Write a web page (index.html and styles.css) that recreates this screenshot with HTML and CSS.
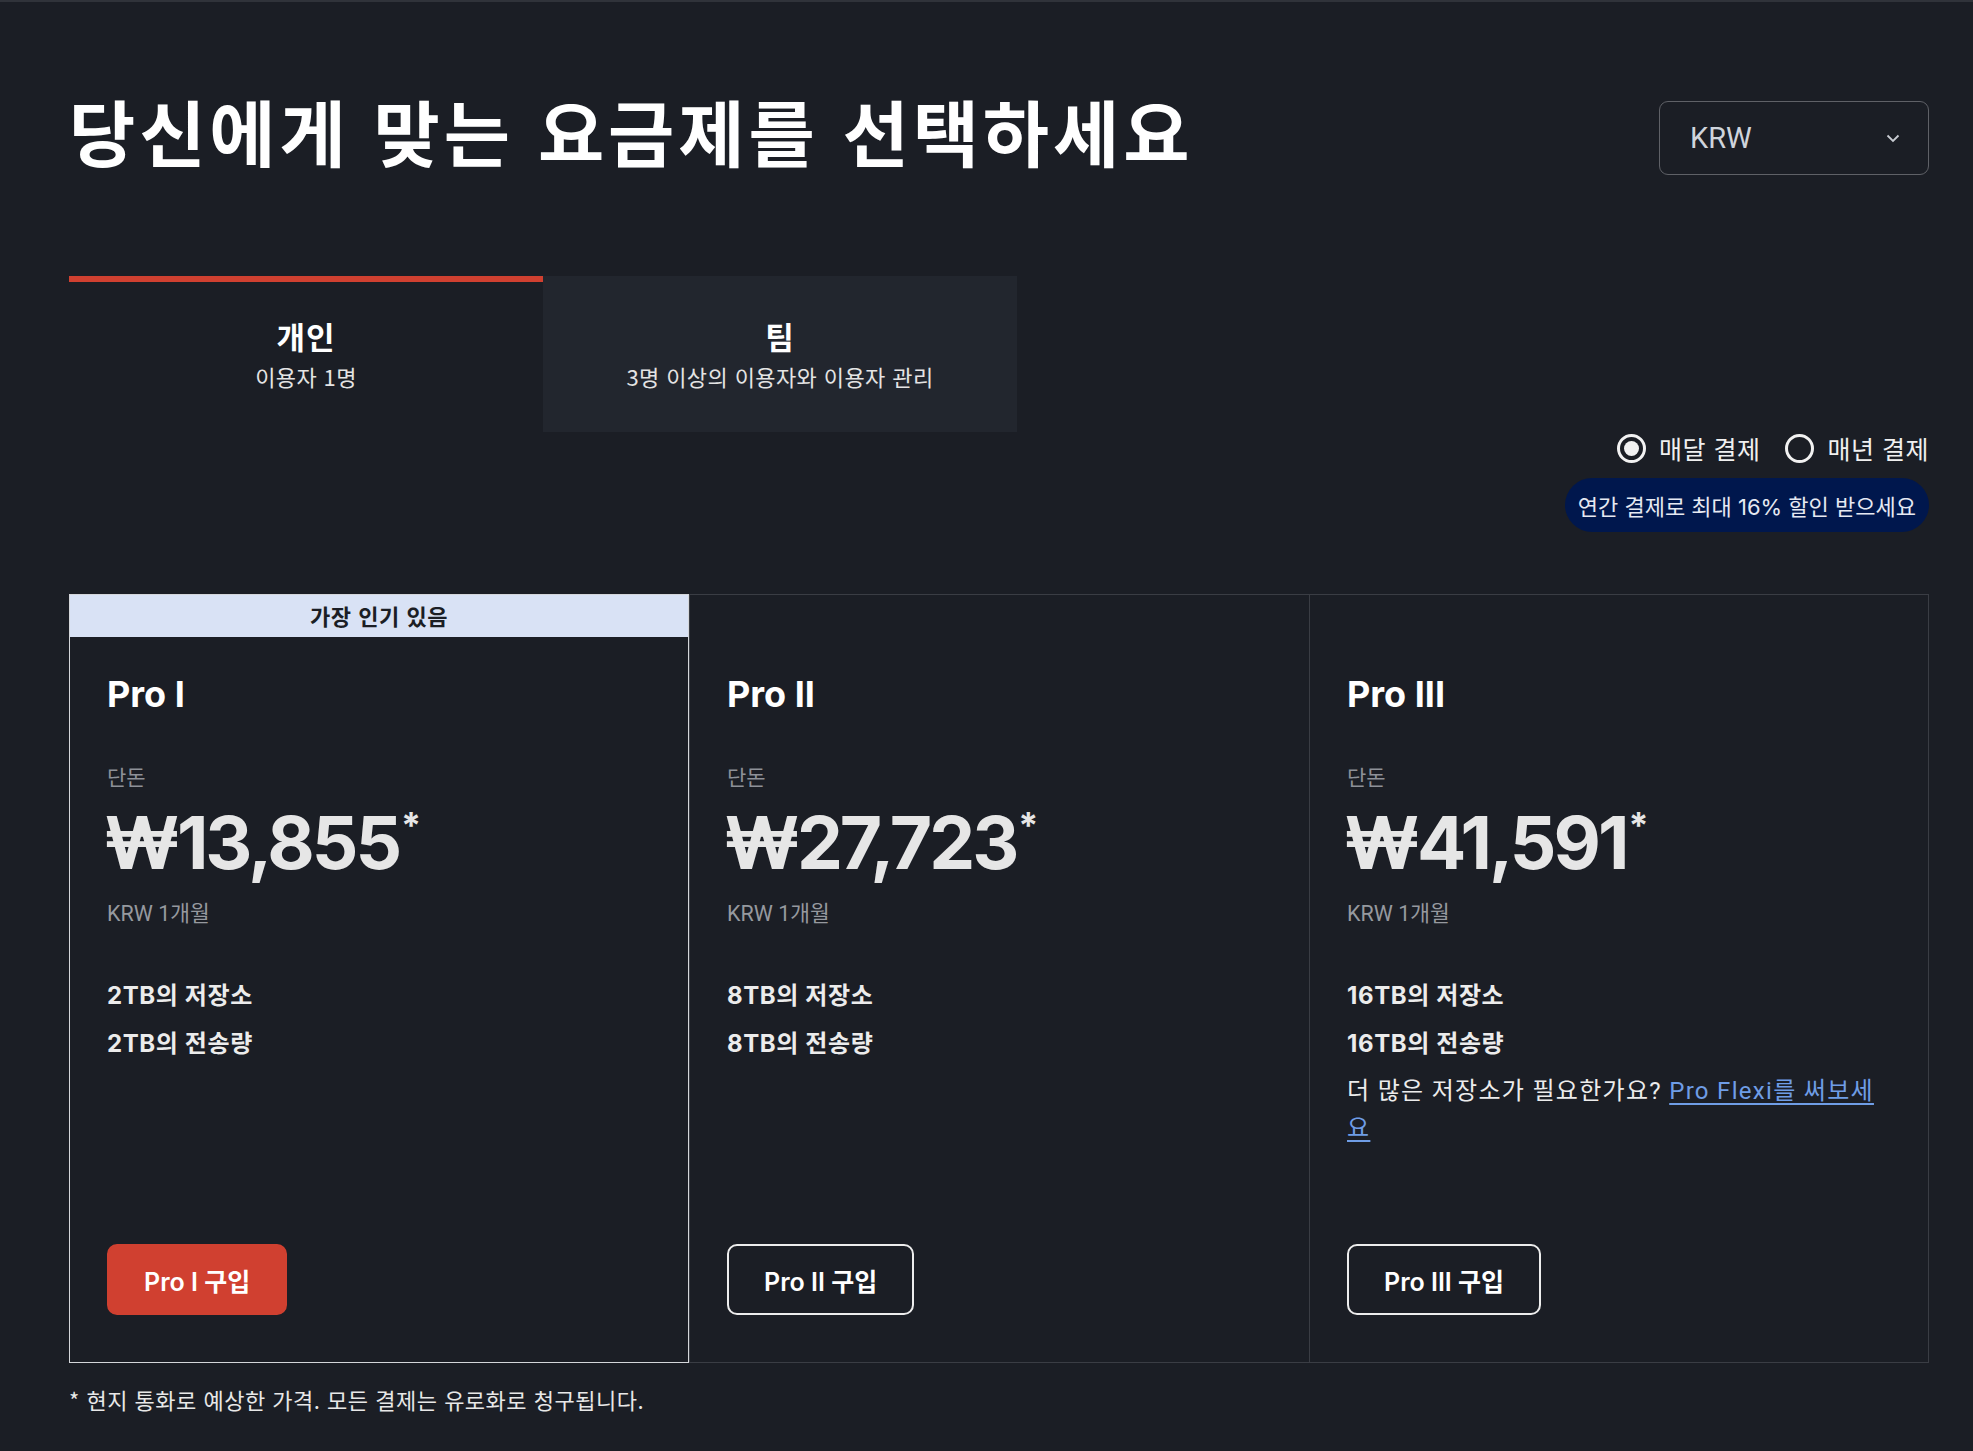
FILE: index.html
```html
<!DOCTYPE html>
<html lang="ko">
<head>
<meta charset="utf-8">
<title>요금제</title>
<link rel="stylesheet" href="styles.css">
</head>
<body>
<div class="page">
  <header class="header">
    <h1 class="title">당신에게 맞는 요금제를 선택하세요</h1>
    <div class="select">
      <span class="select-value">KRW</span>
      <svg class="chevron" width="14" height="9" viewBox="0 0 14 9"><path d="M1.5 1.5 L7 7 L12.5 1.5" fill="none" stroke="#c8ccd2" stroke-width="1.8"/></svg>
    </div>
  </header>

  <nav class="tabs">
    <div class="tab active">
      <div class="tab-title">개인</div>
      <div class="tab-sub">이용자 1명</div>
    </div>
    <div class="tab inactive">
      <div class="tab-title">팀</div>
      <div class="tab-sub">3명 이상의 이용자와 이용자 관리</div>
    </div>
  </nav>

  <div class="billing">
    <div class="radios">
      <label class="radio"><span class="dot checked"></span>매달 결제</label>
      <label class="radio"><span class="dot"></span>매년 결제</label>
    </div>
    <div class="promo">연간 결제로 최대 16% 할인 받으세요</div>
  </div>

  <section class="cards">
    <article class="card popular">
      <div class="ribbon">가장 인기 있음</div>
      <h2 class="plan">Pro I</h2>
      <div class="from">단돈</div>
      <div class="price"><span class="amount">₩13,855</span><span class="star">*</span></div>
      <div class="period">KRW 1개월</div>
      <ul class="features">
        <li>2TB의 저장소</li>
        <li>2TB의 전송량</li>
      </ul>
      <a class="btn primary">Pro I 구입</a>
    </article>
    <article class="card">
      <h2 class="plan">Pro II</h2>
      <div class="from">단돈</div>
      <div class="price"><span class="amount">₩27,723</span><span class="star">*</span></div>
      <div class="period">KRW 1개월</div>
      <ul class="features">
        <li>8TB의 저장소</li>
        <li>8TB의 전송량</li>
      </ul>
      <a class="btn outline">Pro II 구입</a>
    </article>
    <article class="card last">
      <h2 class="plan">Pro III</h2>
      <div class="from">단돈</div>
      <div class="price"><span class="amount">₩41,591</span><span class="star">*</span></div>
      <div class="period">KRW 1개월</div>
      <ul class="features">
        <li>16TB의 저장소</li>
        <li>16TB의 전송량</li>
      </ul>
      <p class="more">더 많은 저장소가 필요한가요? <a class="link">Pro Flexi를 써보세요</a></p>
      <a class="btn outline">Pro III 구입</a>
    </article>
  </section>

  <p class="footnote">* 현지 통화로 예상한 가격. 모든 결제는 유로화로 청구됩니다.</p>
</div>
</body>
</html>
```
FILE: styles.css
```css
* { box-sizing: border-box; }
html, body { margin: 0; padding: 0; }
body {
  background: #1b1e25;
  color: #ececec;
  font-family: Inter, "Noto Sans CJK KR", sans-serif;
  border-top: 2px solid #30333a;
  min-height: 1451px;
}
.page {
  padding: 0 44px 0 69px;
}
.header {
  display: flex;
  justify-content: space-between;
  align-items: flex-start;
  margin-top: 99px;
}
.title {
  margin: 0;
  font-family: "Noto Sans CJK KR", sans-serif;
  font-size: 72px;
  font-weight: 700;
  line-height: 58px;
  letter-spacing: 3.9px;
  color: #ffffff;
}
.select {
  width: 270px;
  height: 74px;
  border: 1px solid #5f6167;
  border-radius: 9px;
  display: flex;
  align-items: center;
  justify-content: space-between;
  padding: 0 28px 0 30px;
}
.select-value {
  font-family: Roboto, sans-serif;
  font-size: 29px;
  color: #cfd4dc;
}
.tabs {
  display: flex;
  margin-top: 101px;
}
.tab {
  width: 474px;
  height: 156px;
  border-top: 6px solid transparent;
  display: flex;
  flex-direction: column;
  align-items: center;
  justify-content: center;
  padding-bottom: 8px;
}
.tab.active { border-top-color: #d04030; }
.tab.inactive { background: #22262e; }
.tab-title {
  font-family: "Noto Sans CJK KR", sans-serif;
  font-size: 31px;
  font-weight: 700;
  line-height: 40px;
  letter-spacing: 1px;
  color: #ffffff;
}
.tab-sub {
  margin-top: 6px;
  font-family: "Noto Sans CJK KR", sans-serif;
  font-size: 22px;
  line-height: 28px;
  letter-spacing: 0.4px;
  color: #e4e4e4;
}
.billing {
  display: flex;
  flex-direction: column;
  align-items: flex-end;
}
.radios {
  display: flex;
  gap: 25px;
  height: 32px;
  align-items: center;
}
.radio {
  display: flex;
  align-items: center;
  gap: 13px;
  font-family: "Noto Sans CJK KR", sans-serif;
  font-size: 25px;
  letter-spacing: 0.5px;
  color: #f0f0f0;
}
.dot {
  width: 29px;
  height: 29px;
  border-radius: 50%;
  border: 3px solid #f2f2f2;
  display: flex;
  align-items: center;
  justify-content: center;
}
.dot.checked::after {
  content: "";
  width: 15px;
  height: 15px;
  border-radius: 50%;
  background: #f2f2f2;
}
.promo {
  margin-top: 14px;
  height: 54px;
  border-radius: 27px;
  background: #00174d;
  padding: 0 13px;
  display: flex;
  align-items: center;
  font-family: Inter, "Noto Sans CJK KR", sans-serif;
  font-size: 22px;
  color: #e6e9f2;
}
.cards {
  margin-top: 62px;
  display: grid;
  grid-template-columns: repeat(3, 620px);
}
.card {
  position: relative;
  height: 769px;
  border: 1px solid #3a3d44;
  border-right: none;
  padding: 77px 50px 47px 37px;
  display: flex;
  flex-direction: column;
  align-items: flex-start;
}
.card.last { border-right: 1px solid #3a3d44; }
.card.popular { border: 1px solid #d4d6da; }
.ribbon {
  position: absolute;
  top: 0;
  left: 0;
  right: 0;
  height: 42px;
  padding-bottom: 3px;
  background: #d9e2f5;
  color: #1b1e25;
  font-family: "Noto Sans CJK KR", sans-serif;
  font-size: 22px;
  font-weight: 700;
  letter-spacing: 0.5px;
  display: flex;
  align-items: center;
  justify-content: center;
}
.plan {
  margin: 0;
  font-size: 36px;
  font-weight: 700;
  line-height: 44px;
  color: #ffffff;
}
.from {
  margin-top: 46px;
  font-family: "Noto Sans CJK KR", sans-serif;
  font-size: 21px;
  line-height: 28px;
  color: #8e9198;
}
.price {
  margin-top: 13px;
  margin-left: -3px;
  display: flex;
  align-items: flex-start;
  color: #e6e6e6;
  font-weight: 700;
}
.price .amount {
  font-size: 73px;
  line-height: 80px;
  letter-spacing: -3px;
}
.price .star {
  font-size: 36px;
  line-height: 36px;
  margin-left: 2px;
  margin-top: 4px;
}
.period {
  margin-top: 17px;
  font-family: Roboto, "Noto Sans CJK KR", sans-serif;
  font-size: 21.5px;
  line-height: 28px;
  color: #96999f;
}
.features {
  list-style: none;
  margin: 49px 0 0 0;
  padding: 0;
}
.features li {
  font-size: 24px;
  font-weight: 700;
  line-height: 37px;
  letter-spacing: 0.6px;
  margin-bottom: 11px;
  color: #ececec;
}
.more {
  margin: 0;
  font-size: 24px;
  line-height: 37px;
  letter-spacing: 1.3px;
  color: #ececec;
  font-family: Roboto, "Noto Sans CJK KR", sans-serif;
}
.link {
  color: #6f9de6;
  text-decoration: underline;
  text-underline-offset: 4px;
}
.btn {
  margin-top: auto;
  height: 71px;
  padding: 0 35px;
  border-radius: 10px;
  display: flex;
  align-items: center;
  font-size: 25px;
  font-weight: 600;
  color: #ffffff;
}
.btn.primary {
  background: #d04030;
  border: 2px solid #d04030;
}
.btn.outline {
  border: 2px solid #ededed;
}
.footnote {
  margin: 21px 0 0 0;
  font-family: "Noto Sans CJK KR", sans-serif;
  font-size: 22px;
  line-height: 30px;
  letter-spacing: 0.5px;
  color: #e8e8e8;
}
```
